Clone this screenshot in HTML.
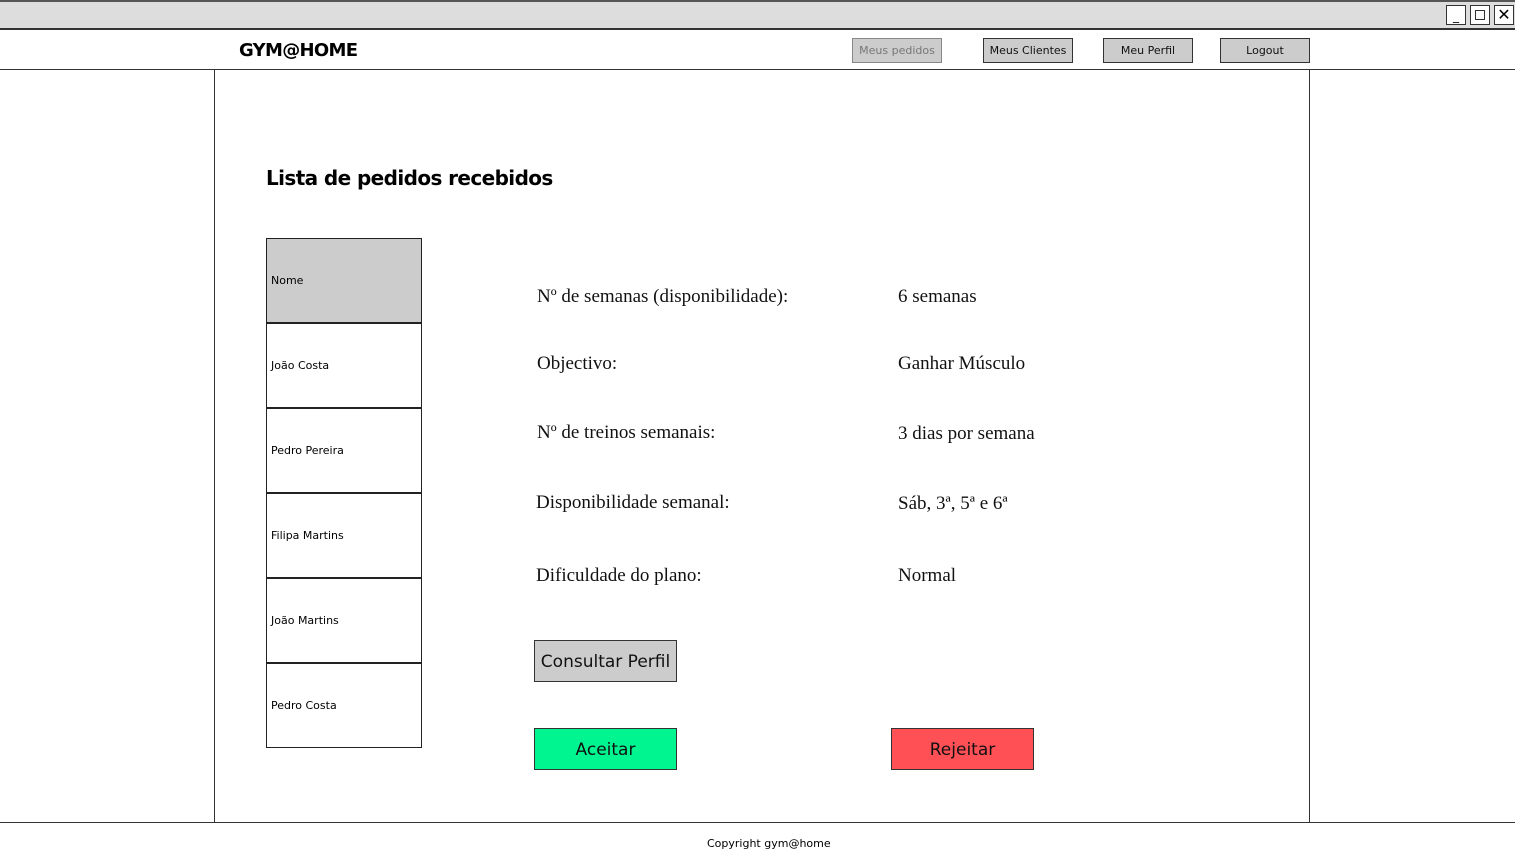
<!DOCTYPE html>
<html><head><meta charset="utf-8"><style>
*{margin:0;padding:0;box-sizing:border-box}
body{width:1515px;height:863px;background:#fff;position:relative;overflow:hidden;font-family:"DejaVu Sans","Liberation Sans",sans-serif}
.abs{position:absolute}
.btn{position:absolute;background:#ccc;border:1px solid #333;font-size:11px;text-align:center;color:#111}
.serif{font-family:"Liberation Serif",serif;font-size:19px;color:#111;position:absolute}
.row{position:absolute;left:266px;width:156px;height:85px;border:1px solid #222;font-size:11px;padding-left:4px;display:flex;align-items:center;background:#fff}
</style></head><body>
<div class="abs" style="left:0;top:0;width:1515px;height:30px;background:#ddd;border-top:2px solid #555;border-bottom:2px solid #333"></div>
<div class="abs" style="left:1446px;top:5px;width:20px;height:20px;border:1px solid #333;background:#fff;font-size:12px;line-height:20px;text-align:center">_</div>
<div class="abs" style="left:1470px;top:5px;width:20px;height:20px;border:1px solid #333;background:#fff"><div style="margin:4px;width:10px;height:10px;border:1px solid #333"></div></div>
<div class="abs" style="left:1494px;top:5px;width:20px;height:20px;border:1px solid #333;background:#fff;font-size:16px;line-height:18px;text-align:center">✕</div>
<div class="abs" style="left:239px;top:40px;font-size:18px;font-weight:bold;letter-spacing:-0.7px">GYM@HOME</div>
<div class="btn" style="left:852px;top:38px;width:90px;height:25px;line-height:24px;color:#777;border-color:#888">Meus pedidos</div>
<div class="btn" style="left:983px;top:38px;width:90px;height:25px;line-height:24px">Meus Clientes</div>
<div class="btn" style="left:1103px;top:38px;width:90px;height:25px;line-height:24px">Meu Perfil</div>
<div class="btn" style="left:1220px;top:38px;width:90px;height:25px;line-height:24px">Logout</div>
<div class="abs" style="left:0;top:69px;width:1515px;height:1px;background:#333"></div>
<div class="abs" style="left:214px;top:70px;width:1px;height:753px;background:#333"></div>
<div class="abs" style="left:1309px;top:70px;width:1px;height:753px;background:#333"></div>
<div class="abs" style="left:0;top:822px;width:1515px;height:1px;background:#333"></div>
<div class="abs" style="left:707px;top:837px;font-size:11px">Copyright gym@home</div>
<div class="abs" style="left:266px;top:166px;font-size:20px;font-weight:bold;letter-spacing:-0.6px">Lista de pedidos recebidos</div>
<div class="row" style="top:238px;background:#ccc">Nome</div>
<div class="row" style="top:323px">João Costa</div>
<div class="row" style="top:408px">Pedro Pereira</div>
<div class="row" style="top:493px">Filipa Martins</div>
<div class="row" style="top:578px">João Martins</div>
<div class="row" style="top:663px">Pedro Costa</div>
<div class="serif" style="left:537px;top:286px">Nº de semanas (disponibilidade):</div>
<div class="serif" style="left:898px;top:286px">6 semanas</div>
<div class="serif" style="left:537px;top:353px">Objectivo:</div>
<div class="serif" style="left:898px;top:353px">Ganhar Músculo</div>
<div class="serif" style="left:537px;top:422px">Nº de treinos semanais:</div>
<div class="serif" style="left:898px;top:423px">3 dias por semana</div>
<div class="serif" style="left:536px;top:492px">Disponibilidade semanal:</div>
<div class="serif" style="left:898px;top:493px">Sáb, 3ª, 5ª e 6ª</div>
<div class="serif" style="left:536px;top:565px">Dificuldade do plano:</div>
<div class="serif" style="left:898px;top:565px">Normal</div>
<div class="btn" style="left:534px;top:640px;width:143px;height:42px;line-height:42px;font-size:17px">Consultar Perfil</div>
<div class="btn" style="left:534px;top:728px;width:143px;height:42px;line-height:42px;font-size:17px;background:#00f590">Aceitar</div>
<div class="btn" style="left:891px;top:728px;width:143px;height:42px;line-height:42px;font-size:17px;background:#ff5056">Rejeitar</div>
</body></html>
